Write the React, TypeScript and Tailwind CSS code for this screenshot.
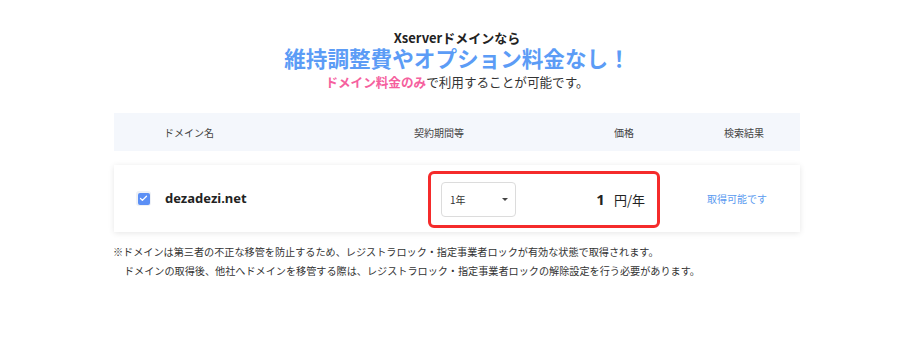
import { Check } from 'lucide-react';

const jp = { fontFamily: '"Noto Sans CJK JP", "Noto Sans", sans-serif' };

function Checkbox() {
  return (
    <span className="flex h-[15px] w-[15px] items-center justify-center rounded-[3px] bg-[#eef1f6]">
      <span className="flex h-[12px] w-[12px] items-center justify-center rounded-[2px] bg-[#5b8ff5]">
        <Check className="h-[9px] w-[9px] text-white" strokeWidth={3.5} />
      </span>
    </span>
  );
}

function PeriodSelect() {
  return (
    <div className="flex h-[35px] w-[75px] items-center justify-between rounded-[4px] border border-[#dcdcdc] bg-white pl-[8px] pr-[7px] text-[10px] text-[#333]">
      <span>1年</span>
      <span className="h-0 w-0 border-x-[3px] border-t-[3px] border-x-transparent border-t-[#444]" />
    </div>
  );
}

export default function App() {
  return (
    <div className="min-h-[340px] w-full bg-white text-[#333]" style={jp}>
      <div className="mx-auto w-[686px] pt-[31px]">
        <div className="flex flex-col items-center">
          <p className="text-[13px] font-bold leading-[13px] text-[#222]">Xserverドメインなら</p>
          <p className="mt-[3px] text-[21.6px] font-bold leading-[22px] text-[#5c9cf6]">維持調整費やオプション料金なし！</p>
          <p className="mt-[6px] text-[12.6px] leading-[13px] text-[#333]">
            <span className="font-bold text-[#f5609e]">ドメイン料金のみ</span>で利用することが可能です。
          </p>
        </div>

        <div className="mt-[25px] grid h-[38px] grid-cols-[300px_200px_110px_1fr] items-center bg-[#f4f7fc] text-[10px] text-[#444]">
          <span className="pl-[50px]">ドメイン名</span>
          <span>契約期間等</span>
          <span>価格</span>
          <span>検索結果</span>
        </div>

        <div className="mt-[14px] flex h-[67px] items-center bg-white shadow-[0_1px_6px_rgba(0,0,0,0.1)]">
          <div className="flex w-[314px] items-center pl-[22px]">
            <Checkbox />
            <span
              className="ml-[14px] text-[13px] font-bold text-[#222]"
              style={{ fontFamily: '"Noto Sans", sans-serif' }}
            >
              dezadezi.net
            </span>
          </div>
          <div className="mt-[2px] flex h-[57px] w-[232px] items-center justify-between rounded-[6px] border-[3px] border-[#f52b2b] pl-[10px] pr-[12px]">
            <PeriodSelect />
            <div className="flex items-baseline gap-[9px] text-[#222]">
              <span className="text-[15px] font-bold" style={{ fontFamily: '"Noto Sans", sans-serif' }}>1</span>
              <span className="text-[13px]">円/年</span>
            </div>
          </div>
          <div className="pl-[47px] text-[10px] text-[#5b9bf0]">取得可能です</div>
        </div>

        <div className="mt-[10px] text-[10.15px] leading-[19px] text-[#333]">
          <p className="-ml-[1px]">※ドメインは第三者の不正な移管を防止するため、レジストラロック・指定事業者ロックが有効な状態で取得されます。</p>
          <p className="pl-[10px]">ドメインの取得後、他社へドメインを移管する際は、レジストラロック・指定事業者ロックの解除設定を行う必要があります。</p>
        </div>
      </div>
    </div>
  );
}
